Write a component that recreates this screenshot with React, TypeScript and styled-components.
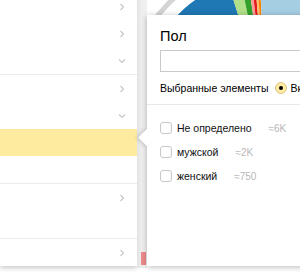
import React from 'react';
import styled, { createGlobalStyle } from 'styled-components';

const GlobalStyle = createGlobalStyle`
  html, body {
    margin: 0;
    padding: 0;
    background: #fff;
    overflow: hidden;
  }
  body {
    font-family: Arial, "Liberation Sans", sans-serif;
  }
`;

const Page = styled.div`
  position: relative;
  width: 300px;
  height: 272px;
  overflow: hidden;
  background: #fff;
`;

// chart behind the panels (drawn content, free canvas)
const ChartLayer = styled.svg`
  position: absolute;
  left: 0;
  top: 0;
`;

const SidePanel = styled.div`
  position: relative;
  width: 137px;
  margin-top: -7px;
  background: #fff;
  box-shadow: 0 2px 5px rgba(0, 0, 0, 0.22);

  &::after {
    content: '';
    position: absolute;
    left: 100%;
    top: 0;
    bottom: -2px;
    width: 10px;
    background: linear-gradient(to right, #e2e2e2, #eeeeee 40%, #f1f1f1);
  }
`;

const Section = styled.div<{ $last?: boolean }>`
  border-bottom: ${({ $last }) => ($last ? 'none' : '1px solid #ebebeb')};
`;

const Row = styled.div<{ $active?: boolean }>`
  height: 27px;
  display: flex;
  align-items: center;
  justify-content: flex-end;
  padding-right: 11px;
  background: ${({ $active }) => ($active ? '#ffeba0' : 'transparent')};
`;

const Bar = styled.div`
  position: absolute;
  left: 141px;
  top: 252px;
  width: 5px;
  height: 13px;
  background: #ee8a8c;
`;

const Popup = styled.div`
  position: absolute;
  left: 147px;
  top: 15px;
  width: 190px;
  height: 251px;
  background: #fff;
  box-shadow: 0 1px 6px rgba(0, 0, 0, 0.28);
  padding-top: 12px;
  box-sizing: border-box;

  &::before {
    content: '';
    position: absolute;
    left: -6px;
    top: 116px;
    width: 13px;
    height: 13px;
    background: #fff;
    transform: rotate(45deg);
    box-shadow: -2px 2px 4px rgba(0, 0, 0, 0.12);
  }
`;

const Inner = styled.div`
  position: relative;
  padding: 0 13px;
`;

const Title = styled.div`
  font-size: 14.5px;
  line-height: 18px;
  color: #000;
`;

const SearchInput = styled.div`
  margin-top: 5px;
  height: 22px;
  border: 1px solid #c9c9c9;
  box-sizing: border-box;
`;

const ModeRow = styled.div`
  margin-top: 8px;
  height: 16px;
  display: flex;
  align-items: center;
  font-size: 10.5px;
  color: #000;
  white-space: nowrap;
`;

const Radio = styled.span`
  margin-left: 7px;
  margin-right: 3px;
  width: 12px;
  height: 12px;
  flex: none;
  border-radius: 50%;
  background: #ffeba0;
  border: 1px solid #d8c68a;
  box-sizing: border-box;
  display: flex;
  align-items: center;
  justify-content: center;

  &::after {
    content: '';
    width: 4px;
    height: 4px;
    border-radius: 50%;
    background: #000;
  }
`;

const Divider = styled.div`
  margin-top: 8px;
  height: 1px;
  background: #e8e8e8;
`;

const OptionList = styled.div`
  position: relative;
  padding: 11px 13px 0;
`;

const Option = styled.div`
  height: 24px;
  display: flex;
  align-items: center;
  font-size: 10.5px;
  white-space: nowrap;
`;

const Checkbox = styled.span`
  width: 12px;
  height: 12px;
  flex: none;
  border: 1px solid #c8c8c8;
  border-radius: 3px;
  box-sizing: border-box;
  margin-right: 5px;
`;

const OptionLabel = styled.span`
  color: #111;
`;

const Count = styled.span`
  margin-left: 17px;
  font-size: 10px;
  color: #b8b8b8;
`;

const Chevron = ({ dir }: { dir: 'right' | 'down' }) => (
  <svg width="8" height="8" viewBox="0 0 8 8">
    {dir === 'right' ? (
      <polyline points="2.5,1 5.5,4 2.5,7" fill="none" stroke="#c6c6c6" strokeWidth="1.1" />
    ) : (
      <polyline points="1,2.5 4,5.5 7,2.5" fill="none" stroke="#c6c6c6" strokeWidth="1.1" />
    )}
  </svg>
);

const cx = 265;
const cy = 100;
const R = 122;

const pt = (deg: number, r: number) => {
  const a = (deg * Math.PI) / 180;
  return `${cx + r * Math.sin(a)},${cy - r * Math.cos(a)}`;
};

const slice = (from: number, to: number) => {
  const large = to - from > 180 ? 1 : 0;
  return `M${cx},${cy} L${pt(from, R)} A${R},${R} 0 ${large} 1 ${pt(to, R)} Z`;
};

const slices = [
  { from: 150, to: 342.5, color: '#1f78b4' },
  { from: 342.5, to: 348.5, color: '#b2df8a' },
  { from: 348.5, to: 352, color: '#33a02c' },
  { from: 352, to: 353.6, color: '#fb9a99' },
  { from: 353.6, to: 355.2, color: '#e31a1c' },
  { from: 355.2, to: 356.4, color: '#fdbf6f' },
  { from: 356.4, to: 357.6, color: '#ff7f00' },
  { from: -2.4, to: 150, color: '#a6cee3' },
];

const sections: { rows: ('right' | 'down' | 'none' | 'active')[] }[] = [
  { rows: ['right', 'right', 'down'] },
  { rows: ['right', 'down', 'active', 'none'] },
  { rows: ['right', 'none'] },
  { rows: ['right'] },
];

const options = [
  { label: 'Не определено', count: '≈6K' },
  { label: 'мужской', count: '≈2K' },
  { label: 'женский', count: '≈750' },
];

export default function App() {
  return (
    <>
      <GlobalStyle />
      <Page>
        <ChartLayer width="300" height="272" viewBox="0 0 300 272">
          <circle cx={cx} cy={cy} r={136.5} fill="none" stroke="#d4d4d4" strokeWidth="5" />
          {slices.map((s) => (
            <path key={s.color} d={slice(s.from, s.to)} fill={s.color} />
          ))}
        </ChartLayer>

        <SidePanel>
          {sections.map((section, i) => (
            <Section key={i} $last={i === sections.length - 1}>
              {section.rows.map((row, j) => (
                <Row key={j} $active={row === 'active'}>
                  {(row === 'right' || row === 'down') && <Chevron dir={row} />}
                </Row>
              ))}
            </Section>
          ))}
        </SidePanel>

        <Bar />

        <Popup>
          <Inner>
            <Title>Пол</Title>
            <SearchInput />
            <ModeRow>
              Выбранные элементы
              <Radio />
              Включить
            </ModeRow>
          </Inner>
          <Divider />
          <OptionList>
            {options.map((o) => (
              <Option key={o.label}>
                <Checkbox />
                <OptionLabel>{o.label}</OptionLabel>
                <Count>{o.count}</Count>
              </Option>
            ))}
          </OptionList>
        </Popup>
      </Page>
    </>
  );
}
